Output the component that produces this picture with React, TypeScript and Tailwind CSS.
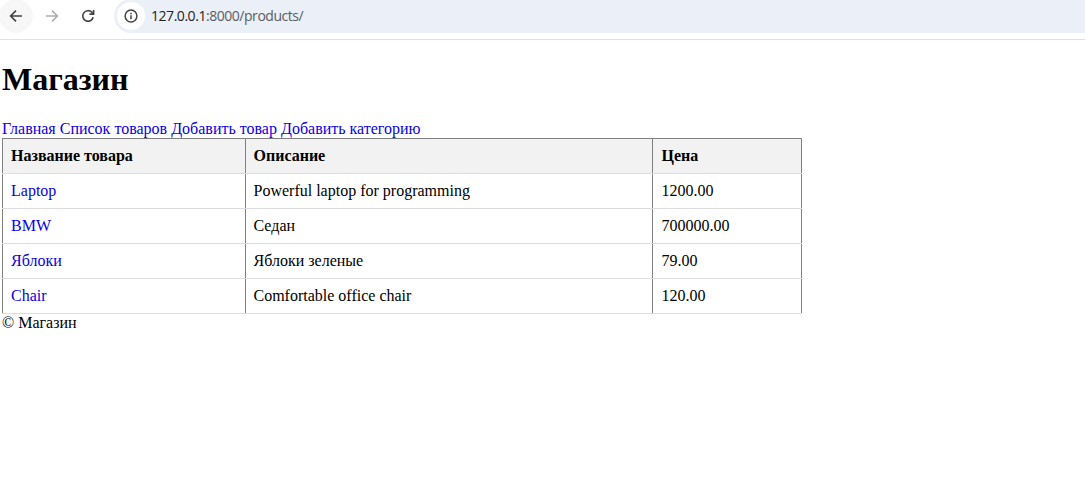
const products = [
  { name: "Laptop", description: "Powerful laptop for programming", price: "1200.00" },
  { name: "BMW", description: "Седан", price: "700000.00" },
  { name: "Яблоки", description: "Яблоки зеленые", price: "79.00" },
  { name: "Chair", description: "Comfortable office chair", price: "120.00" },
];

const links = ["Главная", "Список товаров", "Добавить товар", "Добавить категорию"];

function Arrow({ className }: { className: string }) {
  return (
    <svg viewBox="0 0 14 14" className={className} fill="none" stroke="currentColor" strokeWidth="1.6">
      <path d="M13 7H2M7 1.6 1.6 7 7 12.4" />
    </svg>
  );
}

function Toolbar() {
  return (
    <div className="flex h-10 items-start border-b border-[#dfe1e3] font-['Open_Sans',sans-serif]">
      <div className="-ml-px -mt-px flex size-[34px] items-center justify-center rounded-full bg-[#f7f7f7] text-[#404244]">
        <Arrow className="size-[14px]" />
      </div>
      <div className="ml-3 flex h-8 w-[14px] items-center text-[#adaeb0]">
        <Arrow className="size-[14px] rotate-180" />
      </div>
      <div className="ml-[22px] flex h-8 w-[14px] items-center text-[#404244]">
        <svg viewBox="0 0 14 14" className="size-[14px]" fill="none" stroke="currentColor" strokeWidth="1.6">
          <path d="M12.2 8.3A5.3 5.3 0 1 1 10.9 3.3L12.2 4.7" />
          <path d="M12.6 .9V5.1H8.4" />
        </svg>
      </div>
      <div className="-mt-px ml-[19px] flex h-[34px] flex-1 items-center rounded-l-full bg-[#ebeff8] pl-[3px]">
        <div className="flex size-7 items-center justify-center rounded-full bg-white text-[#404244]">
          <svg viewBox="0 0 14 14" className="size-[14px]" fill="none" stroke="currentColor" strokeWidth="1.5">
            <circle cx="7" cy="7" r="5.9" />
            <path d="M7 6.3V10.2M7 3.7V5.2" />
          </svg>
        </div>
        <span className="ml-[6px] whitespace-pre text-[14px] leading-5 tracking-[-0.46px] text-[#5a5d61]">
          <span className="text-[#202226]">127.0.0.1</span>:8000/products/
        </span>
      </div>
    </div>
  );
}

export default function App() {
  return (
    <div className="h-[492px] overflow-hidden bg-white font-['Liberation_Serif',serif] text-[16px] leading-[18px] text-black">
      <Toolbar />
      <main className="pl-[2px]">
        <h1 className="pt-[21px] text-[32px] font-bold leading-[37px]">Магазин</h1>
        <nav className="flex gap-1 pt-[22px] text-[#0b00e0]">
          {links.map((link) => (
            <a key={link} href="#">{link}</a>
          ))}
        </nav>
        <table className="w-[800px] table-fixed border-collapse border border-[#808080] text-left">
          <colgroup>
            <col className="w-[243px]" />
            <col className="w-[407px]" />
            <col />
          </colgroup>
          <thead>
            <tr className="h-[35px] bg-[#f2f2f2]">
              {["Название товара", "Описание", "Цена"].map((title) => (
                <th key={title} className="border border-[#808080] border-b-[#dddddd] px-2 py-0 font-bold nth-2:pl-[7.5px] nth-3:pl-[8.5px]">{title}</th>
              ))}
            </tr>
          </thead>
          <tbody>
            {products.map((product) => (
              <tr key={product.name} className="h-[35px]">
                <td className="border border-[#808080] border-b-[#dddddd] px-2 py-0">
                  <a href="#" className="text-[#0b00e0]">{product.name}</a>
                </td>
                <td className="border border-[#808080] border-b-[#dddddd] py-0 pl-[7.5px] pr-2">{product.description}</td>
                <td className="border border-[#808080] border-b-[#dddddd] py-0 pl-[8.5px] pr-2">{product.price}</td>
              </tr>
            ))}
          </tbody>
        </table>
        <footer>© Магазин</footer>
      </main>
    </div>
  );
}
